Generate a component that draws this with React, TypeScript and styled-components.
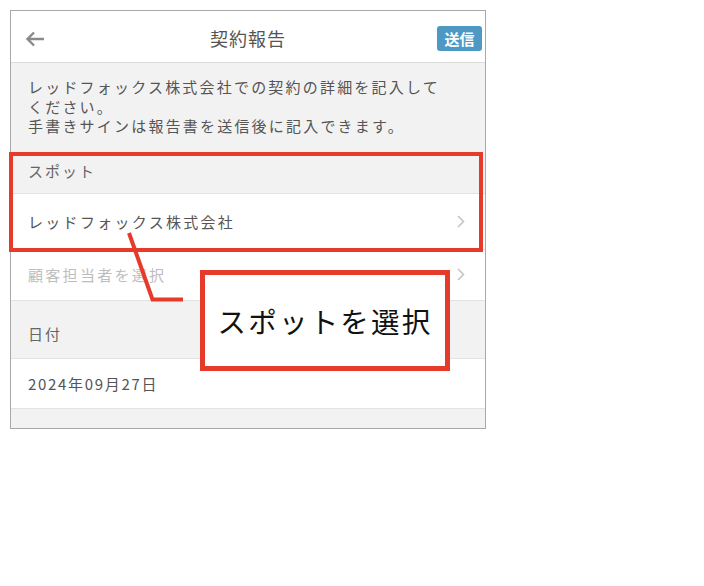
import React from "react";
import styled, { createGlobalStyle } from "styled-components";

const GlobalStyle = createGlobalStyle`
  html, body { margin: 0; padding: 0; background: #ffffff; }
  body { font-family: "Noto Sans CJK JP", "Noto Sans", sans-serif; }
`;

const RED = "#e63a2b";

const Stage = styled.div`
  position: relative;
  width: 704px;
  height: 586px;
  background: #ffffff;
`;

const Phone = styled.div`
  position: absolute;
  left: 10px;
  top: 10px;
  width: 474px;
  height: 417px;
  border: 1px solid #a9a9a9;
  background: #f2f2f2;
  display: flex;
  flex-direction: column;
  overflow: hidden;
  color: #555;
`;

const Header = styled.header`
  height: 51px;
  flex: none;
  background: #fff;
  border-bottom: 1px solid #dcdcdc;
  display: grid;
  grid-template-columns: 60px 1fr 60px;
  align-items: center;
`;

const BackButton = styled.div`
  display: flex;
  align-items: center;
  padding-left: 14px;
  padding-top: 4px;
`;

const Title = styled.h1`
  margin: 0;
  text-align: center;
  font-size: 18px;
  font-weight: 400;
  letter-spacing: 1px;
  color: #555;
  padding-top: 3px;
`;

const SendButton = styled.button`
  justify-self: end;
  margin-right: 3px;
  margin-top: 3px;
  width: 45px;
  height: 25px;
  border: none;
  border-radius: 3px;
  background: #4e99c3;
  color: #fff;
  font-family: inherit;
  font-size: 15px;
  font-weight: 700;
  padding: 0;
  line-height: 25px;
`;

const Notice = styled.p`
  margin: 0;
  padding: 14px 10px 16px 17px;
  font-size: 15px;
  line-height: 19.5px;
  letter-spacing: 2.2px;
  color: #555;
`;

const SectionLabel = styled.div<{ $top: number; $bottom: number }>`
  padding: ${(p) => p.$top}px 17px ${(p) => p.$bottom}px;
  font-size: 15px;
  line-height: 20px;
  letter-spacing: 2px;
  color: #666;
  border-bottom: 1px solid #e2e2e2;
`;

const Row = styled.div<{ $placeholder?: boolean; $height: number; $spacing?: number }>`
  height: ${(p) => p.$height}px;
  flex: none;
  background: #fff;
  border-bottom: 1px solid #e2e2e2;
  display: flex;
  align-items: center;
  justify-content: space-between;
  padding: 0 20px 0 17px;
  font-size: 15px;
  letter-spacing: ${(p) => p.$spacing ?? 2.3}px;
  color: ${(p) => (p.$placeholder ? "#bdbdbd" : "#555")};
`;

const Highlight = styled.div`
  position: absolute;
  left: 9px;
  top: 152px;
  width: 466px;
  height: 92px;
  border: 4px solid ${RED};
  pointer-events: none;
`;

const Callout = styled.div`
  position: absolute;
  left: 200px;
  top: 270px;
  width: 240px;
  height: 91px;
  border: 5px solid ${RED};
  background: #fff;
  display: flex;
  align-items: center;
  justify-content: center;
  font-size: 28.5px;
  letter-spacing: 2.2px;
  color: #111;
`;

const Connector = styled.svg`
  position: absolute;
  left: 0;
  top: 0;
  pointer-events: none;
`;

const Chevron = () => (
  <svg width="8" height="13" viewBox="0 0 8 13">
    <polyline points="1,1 6.5,6.5 1,12" fill="none" stroke="#c4c4c4" strokeWidth="1.6" />
  </svg>
);

const BackArrow = () => (
  <svg width="20" height="16" viewBox="0 0 20 16">
    <path d="M19 8H3M9 1.5L2.5 8 9 14.5" fill="none" stroke="#8a8a8a" strokeWidth="2.4" />
  </svg>
);

export default function App() {
  return (
    <Stage>
      <GlobalStyle />
      <Phone>
        <Header>
          <BackButton>
            <BackArrow />
          </BackButton>
          <Title>契約報告</Title>
          <SendButton>送信</SendButton>
        </Header>
        <Notice>
          レッドフォックス株式会社での契約の詳細を記入して
          <br />
          ください。
          <br />
          手書きサインは報告書を送信後に記入できます。
        </Notice>
        <SectionLabel $top={9} $bottom={12}>スポット</SectionLabel>
        <Row $height={55}>
          <span>レッドフォックス株式会社</span>
          <Chevron />
        </Row>
        <Row $height={50} $placeholder>
          <span>顧客担当者を選択</span>
          <Chevron />
        </Row>
        <SectionLabel $top={23} $bottom={14}>日付</SectionLabel>
        <Row $height={49} $spacing={1.7}>
          <span>2024年09月27日</span>
        </Row>
      </Phone>
      <Highlight />
      <Connector width="704" height="586" viewBox="0 0 704 586">
        <polyline points="129,233 152.5,299.5 183,299.5" fill="none" stroke={RED} strokeWidth="4" />
      </Connector>
      <Callout>スポットを選択</Callout>
    </Stage>
  );
}
